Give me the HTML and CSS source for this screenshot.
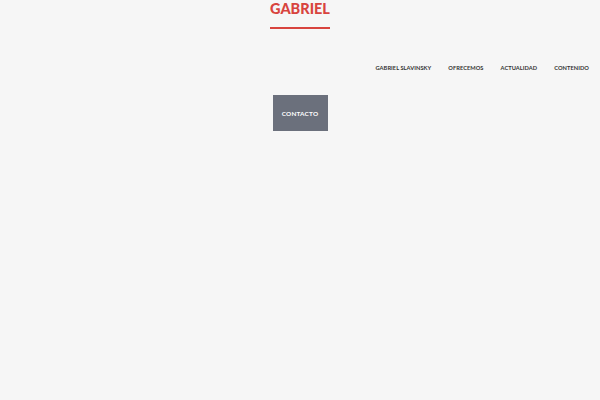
FILE: index.html
```html
<!DOCTYPE html>
<html>
<head>
<meta charset="utf-8">
<link rel="stylesheet" href="styles.css">
</head>
<body>
<header class="header">
  <div class="logo">
    <span class="logo-text">GABRIEL</span>
    <span class="logo-line"></span>
  </div>
  <nav class="nav">
    <a class="nav-item">GABRIEL SLAVINSKY</a>
    <a class="nav-item">OFRECEMOS</a>
    <a class="nav-item">ACTUALIDAD</a>
    <a class="nav-item">CONTENIDO</a>
  </nav>
  <div class="cta-wrap">
    <a class="cta">CONTACTO</a>
  </div>
</header>
</body>
</html>
```
FILE: styles.css
```css
html, body {
  margin: 0;
  padding: 0;
  background: #f6f6f6;
  font-family: "Lato", "DejaVu Sans", sans-serif;
}
.header {
  display: flex;
  flex-direction: column;
  width: 600px;
}
.logo {
  display: flex;
  flex-direction: column;
  align-items: center;
  align-self: center;
  width: 60px;
}
.logo-text {
  color: #d8443e;
  font-family: "Lato", sans-serif;
  font-weight: 900;
  font-size: 14.5px;
  line-height: 18px;
  letter-spacing: 0;
}
.logo-line {
  display: block;
  width: 60px;
  height: 2px;
  background: #d8443e;
  margin-top: 9px;
}
.nav {
  display: flex;
  justify-content: flex-end;
  gap: 17px;
  padding-right: 11px;
  margin-top: 35px;
}
.nav-item {
  font-family: "Lato", sans-serif;
  font-size: 5.7px;
  line-height: 8px;
  color: #333333;
  font-weight: 700;
  letter-spacing: 0.05px;
}
.cta-wrap {
  display: flex;
  justify-content: center;
  margin-top: 23px;
}
.cta {
  display: flex;
  align-items: center;
  justify-content: center;
  width: 55px;
  height: 36px;
  background: #6b707c;
  color: #ffffff;
  font-family: "Lato", sans-serif;
  font-weight: 700;
  font-size: 6.4px;
  letter-spacing: 0.2px;
}
```
